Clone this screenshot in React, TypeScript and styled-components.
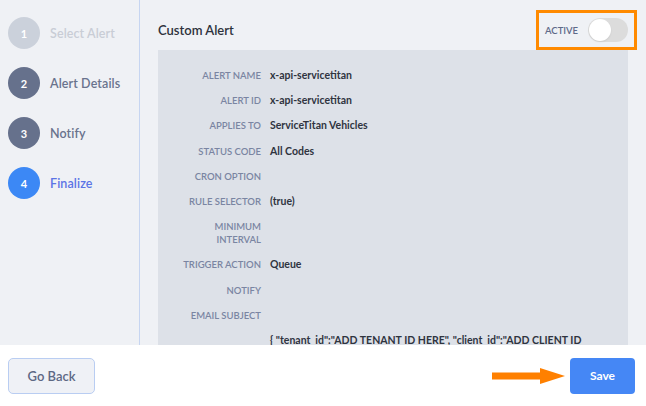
import React from 'react';
import styled, { createGlobalStyle } from 'styled-components';

const GlobalStyle = createGlobalStyle`
  html, body {
    margin: 0;
    padding: 0;
    background: #ffffff;
  }
  body {
    font-family: 'Lato', 'Open Sans', sans-serif;
  }
`;

const Page = styled.div`
  width: 646px;
  height: 406px;
  display: grid;
  grid-template-columns: 140px 1fr;
  grid-template-rows: 345px 1fr;
  overflow: hidden;
`;

const Sidebar = styled.aside`
  background: #eff1f5;
  border-right: 1px solid #c6d5f1;
  display: flex;
  flex-direction: column;
  gap: 18px;
  padding: 17px 0 0 8px;
`;

const Step = styled.div`
  display: flex;
  align-items: center;
  gap: 10px;
`;

type StepState = 'done' | 'current' | 'off';

const Circle = styled.div<{ $state: StepState }>`
  width: 32px;
  height: 32px;
  border-radius: 50%;
  display: flex;
  align-items: center;
  justify-content: center;
  color: #ffffff;
  font-size: 11px;
  font-weight: 700;
  background: ${(p) =>
    p.$state === 'off' ? '#cbd1db' : p.$state === 'current' ? '#3c88f5' : '#66718c'};
`;

const StepLabel = styled.span<{ $state: StepState }>`
  font-size: 12.5px;
  font-weight: 600;
  letter-spacing: 0.1px;
  color: ${(p) =>
    p.$state === 'off' ? '#c9cdd6' : p.$state === 'current' ? '#5b74e6' : '#69738d'};
`;

const Main = styled.main`
  background: #eff1f5;
  overflow: hidden;
  display: flex;
  flex-direction: column;
`;

const Header = styled.div`
  display: flex;
  align-items: center;
  justify-content: space-between;
  padding: 10px 9px 0 18px;
  height: 40px;
`;

const Title = styled.h2`
  margin: 0;
  font-size: 13px;
  font-weight: 600;
  color: #2e323c;
`;

const ActiveBox = styled.div`
  box-sizing: border-box;
  width: 101px;
  height: 40px;
  border: 3px solid #ff8a00;
  display: flex;
  align-items: center;
  justify-content: space-between;
  padding: 0 6px;
`;

const ActiveLabel = styled.span`
  font-size: 9.5px;
  font-weight: 600;
  color: #5e6a89;
`;

const Toggle = styled.div`
  width: 40px;
  height: 24px;
  border-radius: 12px;
  background: #dcdcdc;
  display: flex;
  align-items: center;
  padding: 0 1px;
  box-sizing: border-box;
`;

const Knob = styled.div`
  width: 22px;
  height: 22px;
  border-radius: 50%;
  background: #ffffff;
  box-shadow: 0 1px 2px rgba(0, 0, 0, 0.08);
`;

const Card = styled.div`
  margin: 0 18px;
  background: #dde1e8;
  padding: 19px 0 0 0;
  display: flex;
  flex-direction: column;
  gap: 12.2px;
`;

const Row = styled.div`
  display: grid;
  grid-template-columns: 103px 1fr;
  column-gap: 9px;
  line-height: 13px;
`;

const Label = styled.span`
  text-align: right;
  font-size: 9.5px;
  font-weight: 600;
  color: #7a85a2;
  text-transform: uppercase;
`;

const Value = styled.span`
  font-size: 10.5px;
  font-weight: 700;
  color: #2f343f;
  padding-right: 20px;
`;

const Footer = styled.footer`
  grid-column: 1 / span 2;
  background: #ffffff;
  display: flex;
  align-items: center;
  justify-content: space-between;
  padding: 0 11px 0 8px;
`;

const BackButton = styled.button`
  width: 87px;
  height: 36px;
  border-radius: 5px;
  border: 1px solid #b9cdf2;
  background: #eff1f6;
  color: #5d6884;
  font-family: 'Lato', sans-serif;
  font-size: 13px;
  font-weight: 600;
`;

const SaveGroup = styled.div`
  display: flex;
  align-items: center;
  gap: 4px;
`;

const SaveButton = styled.button`
  width: 65px;
  height: 36px;
  border-radius: 4px;
  border: none;
  background: #4587f5;
  color: #ffffff;
  font-family: 'Lato', sans-serif;
  font-size: 12px;
  font-weight: 700;
`;

const steps: { n: number; label: string; state: StepState }[] = [
  { n: 1, label: 'Select Alert', state: 'off' },
  { n: 2, label: 'Alert Details', state: 'done' },
  { n: 3, label: 'Notify', state: 'done' },
  { n: 4, label: 'Finalize', state: 'current' },
];

const fields: [string, string][] = [
  ['Alert Name', 'x-api-servicetitan'],
  ['Alert ID', 'x-api-servicetitan'],
  ['Applies To', 'ServiceTitan Vehicles'],
  ['Status Code', 'All Codes'],
  ['Cron Option', ''],
  ['Rule Selector', '(true)'],
  ['Minimum Interval', ''],
  ['Trigger Action', 'Queue'],
  ['Notify', ''],
  ['Email Subject', ''],
  ['', '{ "tenant_id":"ADD TENANT ID HERE", "client_id":"ADD CLIENT ID HERE" }'],
];

const App: React.FC = () => {
  return (
    <>
      <GlobalStyle />
      <Page>
        <Sidebar>
          {steps.map((s) => (
            <Step key={s.n}>
              <Circle $state={s.state}>{s.n}</Circle>
              <StepLabel $state={s.state}>{s.label}</StepLabel>
            </Step>
          ))}
        </Sidebar>
        <Main>
          <Header>
            <Title>Custom Alert</Title>
            <ActiveBox>
              <ActiveLabel>ACTIVE</ActiveLabel>
              <Toggle>
                <Knob />
              </Toggle>
            </ActiveBox>
          </Header>
          <Card>
            {fields.map(([label, value], i) => (
              <Row key={i}>
                <Label>{label === 'Minimum Interval' ? <>Minimum<br />Interval</> : label}</Label>
                <Value>{value}</Value>
              </Row>
            ))}
          </Card>
        </Main>
        <Footer>
          <BackButton>Go Back</BackButton>
          <SaveGroup>
            <svg width="74" height="18" viewBox="0 0 74 18">
              <rect x="0" y="5.5" width="50" height="7" fill="#ff8000" />
              <polygon points="48,1 73,9 48,17" fill="#ff8000" />
            </svg>
            <SaveButton>Save</SaveButton>
          </SaveGroup>
        </Footer>
      </Page>
    </>
  );
};

export default App;
